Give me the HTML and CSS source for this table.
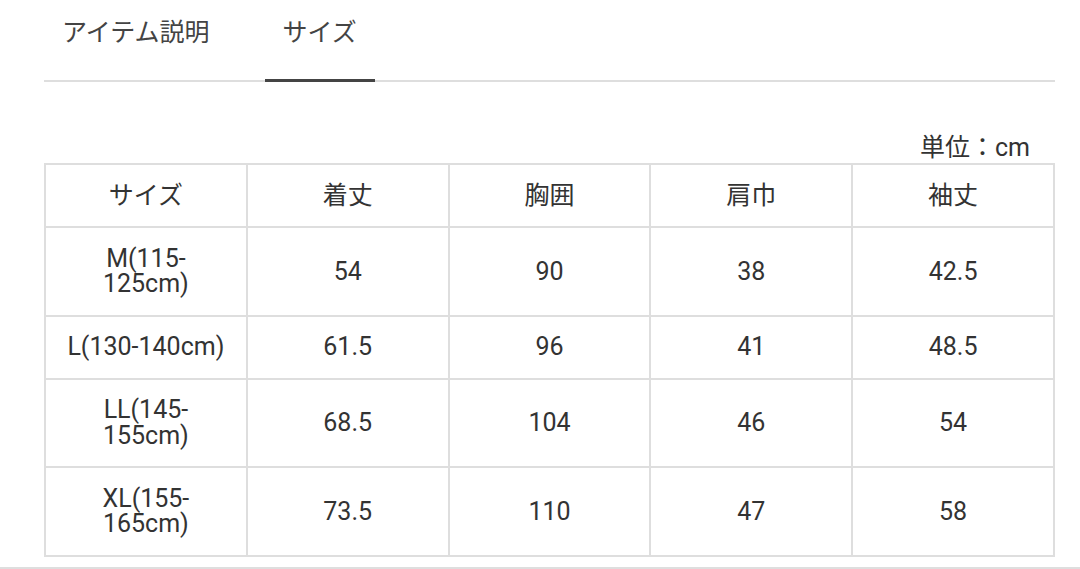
FILE: index.html
```html
<!DOCTYPE html>
<html lang="ja">
<head>
<meta charset="utf-8">
<title>サイズ</title>
<link rel="stylesheet" href="styles.css">
</head>
<body>
<div class="page">
  <nav class="tabs">
    <div class="tab">アイテム説明</div>
    <div class="tab active">サイズ</div>
  </nav>
  <div class="unit">単位：cm</div>
  <table class="size-table">
    <thead>
      <tr><th>サイズ</th><th>着丈</th><th>胸囲</th><th>肩巾</th><th>袖丈</th></tr>
    </thead>
    <tbody>
      <tr><td>M(115-<wbr>125cm)</td><td>54</td><td>90</td><td>38</td><td>42.5</td></tr>
      <tr><td>L(130-<wbr>140cm)</td><td>61.5</td><td>96</td><td>41</td><td>48.5</td></tr>
      <tr><td>LL(145-<wbr>155cm)</td><td>68.5</td><td>104</td><td>46</td><td>54</td></tr>
      <tr><td>XL(155-<wbr>165cm)</td><td>73.5</td><td>110</td><td>47</td><td>58</td></tr>
    </tbody>
  </table>
</div>
<div class="bottom-rule"></div>
</body>
</html>
```
FILE: styles.css
```css
html, body {
  margin: 0;
  padding: 0;
  background: #fff;
}
body {
  font-family: Roboto, "Noto Sans CJK JP", sans-serif;
  font-size: 25px;
  line-height: 25px;
  color: #333;
  width: 1080px;
  height: 569px;
  overflow: hidden;
}
.page {
  padding-left: 44px;
  width: 1011px;
}
.tabs {
  display: flex;
  gap: 37px;
  border-bottom: 2px solid #dedede;
  height: 80px;
}
.tab {
  position: relative;
  padding: 20px 18px 0;
  color: #444;
}
.tab.active::after {
  content: "";
  position: absolute;
  left: 0;
  right: 0;
  bottom: -2px;
  height: 3px;
  background: #444;
}
.unit {
  margin-top: 53px;
  padding-right: 25px;
  text-align: right;
}
.size-table {
  margin-top: 3px;
  width: 1011px;
  table-layout: fixed;
  border-collapse: collapse;
}
.size-table th,
.size-table td {
  border: 2px solid #dedede;
  padding: 17.75px 19px;
  line-height: 25.5px;
  text-align: center;
  font-weight: 400;
  vertical-align: middle;
}
.bottom-rule {
  margin-top: 10px;
  height: 2px;
  background: #dedede;
}
```
